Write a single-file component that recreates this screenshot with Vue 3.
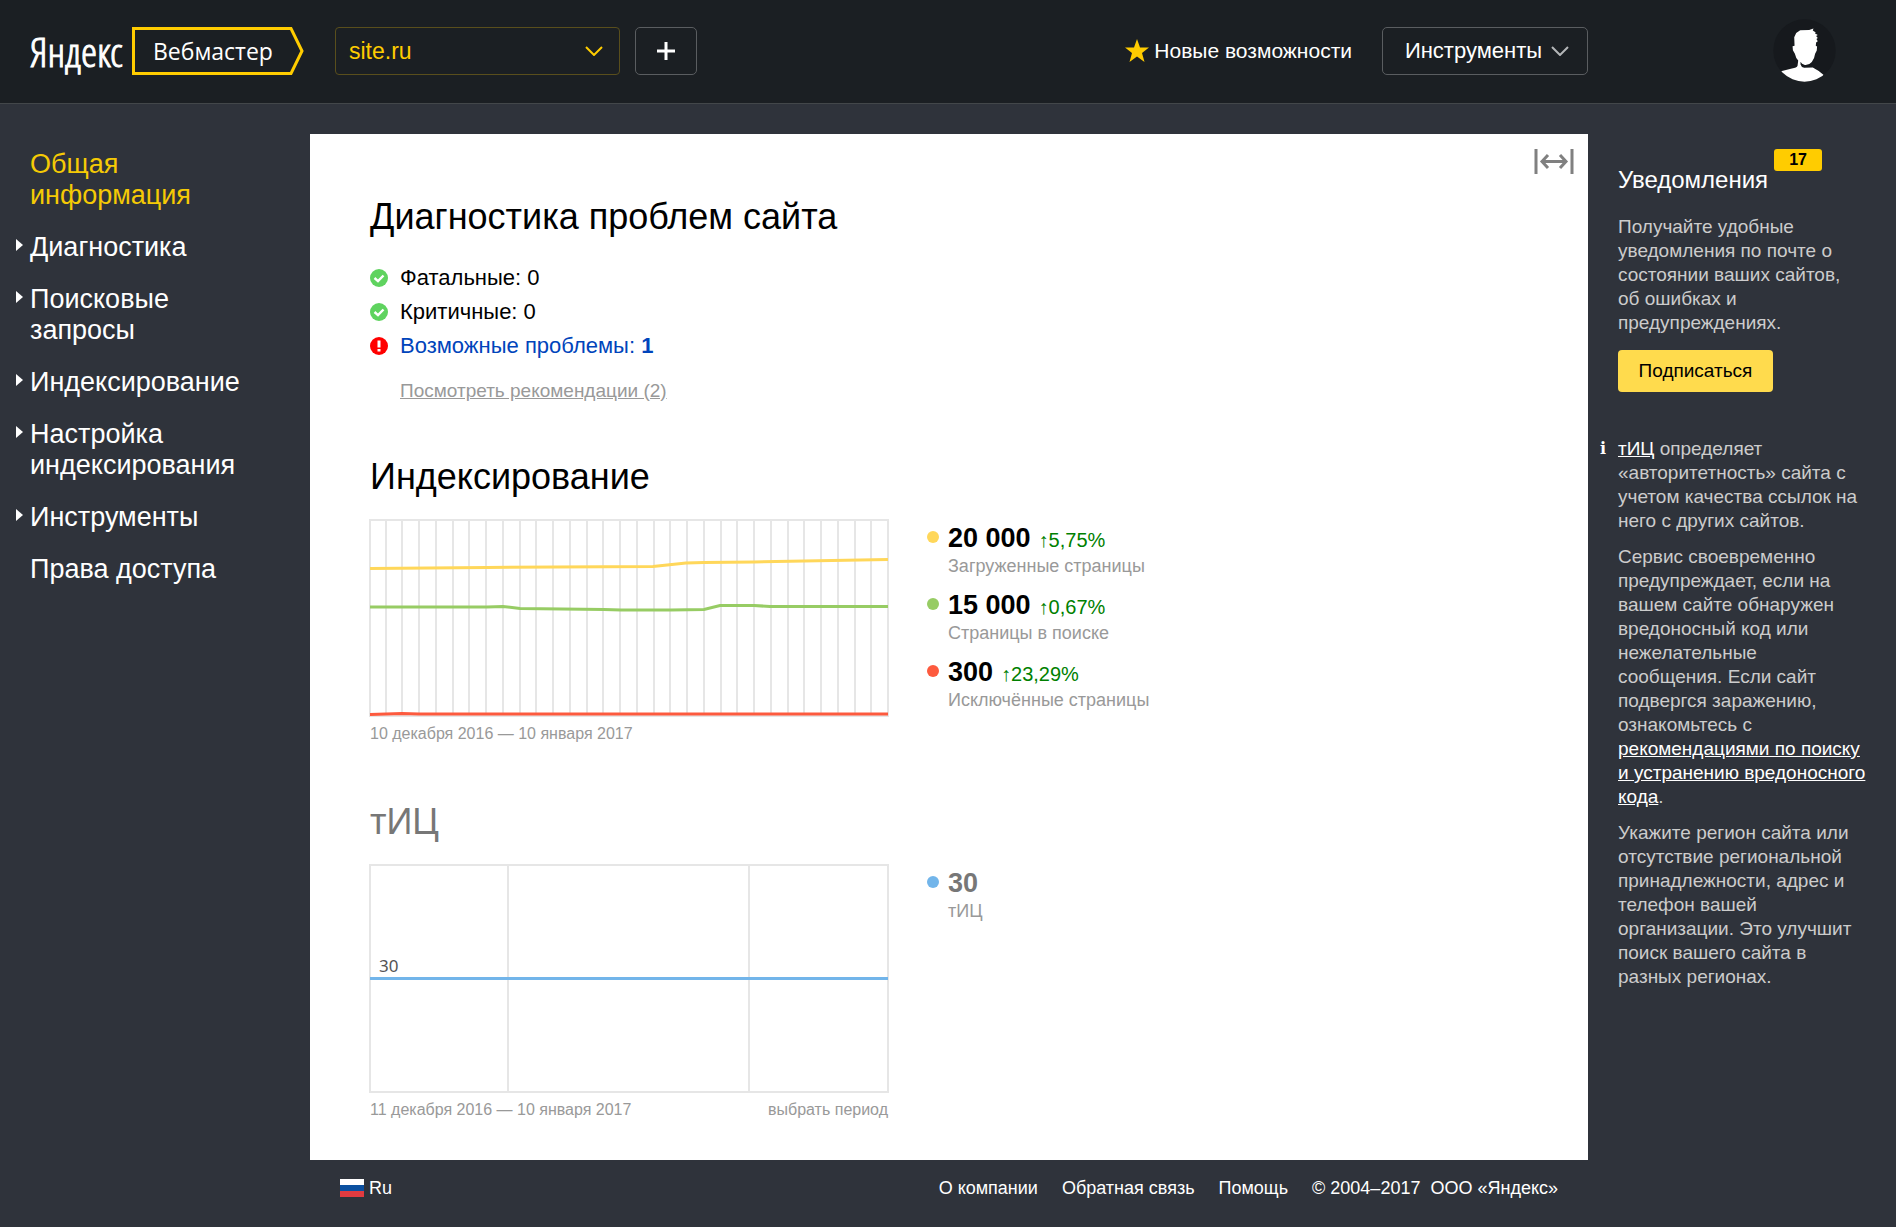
<script setup>
import { ref } from 'vue'

const site = ref('site.ru')

const menu = [
  { text: 'Общая информация', active: true, nested: false },
  { text: 'Диагностика', nested: true },
  { text: 'Поисковые запросы', nested: true },
  { text: 'Индексирование', nested: true },
  { text: 'Настройка индексирования', nested: true },
  { text: 'Инструменты', nested: true },
  { text: 'Права доступа', nested: false },
]

const legend = [
  { color: '#ffd75a', value: '20 000', change: '5,75%', label: 'Загруженные страницы' },
  { color: '#97cc64', value: '15 000', change: '0,67%', label: 'Страницы в поиске' },
  { color: '#fd5a3e', value: '300', change: '23,29%', label: 'Исключённые страницы' },
]

// One vertical rule per day between the chart edges
const dayLines = Array.from({ length: 30 }, (_, i) => Math.round(((i + 1) * 519) / 31))
</script>

<template>
  <div class="page">
    <header class="header">
      <div class="brand">
        <a class="logo" href="#">Яндекс</a>
        <a class="service" href="#">
          <svg class="service-frame" viewBox="0 0 172 48" aria-hidden="true">
            <path d="M1.5 1.5H159L170 24L159 46.5H1.5Z" fill="none" stroke="#fc0" stroke-width="3" />
          </svg>
          <span class="service-name">Вебмастер</span>
        </a>
      </div>

      <div class="toolbar">
        <div class="site-select">
          <select v-model="site" aria-label="Сайт">
            <option value="site.ru">site.ru</option>
          </select>
          <svg class="chevron" viewBox="0 0 18 10" aria-hidden="true">
            <path d="M1 1L9 9L17 1" fill="none" stroke="#fc0" stroke-width="2" />
          </svg>
        </div>
        <button class="box-button add" type="button" aria-label="Добавить сайт">
          <svg width="20" height="20" viewBox="0 0 20 20" aria-hidden="true">
            <path d="M10 1V19M1 10H19" stroke="#fff" stroke-width="3" />
          </svg>
        </button>
        <a class="news" href="#">
          <svg width="24" height="23" viewBox="0 0 24 23" aria-hidden="true">
            <path d="M12 0L15 8.500H24L17 14L19.500 23L12 17.500L4.500 23L7 14L0 8.500H9Z" fill="#fc0" />
          </svg>
          <span>Новые возможности</span>
        </a>
        <button class="box-button tools" type="button">
          <span>Инструменты</span>
          <svg width="18" height="10" viewBox="0 0 18 10" aria-hidden="true">
            <path d="M1 1L9 9L17 1" fill="none" stroke="#b4b6b8" stroke-width="2" />
          </svg>
        </button>
      </div>

      <a class="user" href="#" aria-label="Профиль">
        <svg width="63" height="63" viewBox="38 27 190 190" aria-hidden="true">
          <defs>
            <clipPath id="avatar-clip"><circle cx="133" cy="122" r="94" /></clipPath>
          </defs>
          <circle cx="133" cy="122" r="94" fill="#16191d" />
          <path
            clip-path="url(#avatar-clip)"
            fill="#fff"
            d="M50 217V195L65 184L95 176Q110 174 112 168L114 152Q107 146 104 132L98 121L97 109L103 108L102 82L108 69L120 61L147 60L160 56L158 62L167 68L164 70L173 75L168 78L173 84L169 87L173 94L168 98L167 108L171 110L170 122L165 132Q163 148 155 157Q147 167 134 166Q124 163 121 156L121 164Q123 172 132 174L158 173Q176 182 190 195V217Z"
          />
        </svg>
      </a>
    </header>

    <div class="body">
      <nav class="menu" aria-label="Разделы">
        <ul>
          <li v-for="item in menu" :key="item.text" :class="{ nested: item.nested }">
            <a href="#" :class="{ active: item.active }">{{ item.text }}</a>
          </li>
        </ul>
      </nav>

      <div class="center">
        <main class="card">
          <button class="expand" type="button" aria-label="Растянуть на всю ширину">
            <svg width="40" height="25" viewBox="0 0 40 25" aria-hidden="true">
              <path d="M2 0V25M38 0V25" stroke="#808080" stroke-width="3" />
              <path d="M8 12.500H32M14 6L8 12.500L14 19M26 6L32 12.500L26 19" fill="none" stroke="#808080" stroke-width="3" />
            </svg>
          </button>

          <section>
            <h2>Диагностика проблем сайта</h2>
            <ul class="checks">
              <li>
                <svg width="18" height="18" viewBox="0 0 18 18" aria-hidden="true">
                  <circle cx="9" cy="9" r="9" fill="#5fd35f" />
                  <path d="M4.500 9L8 12.200L13.500 6.500" fill="none" stroke="#fff" stroke-width="2.400" />
                </svg>
                <span>Фатальные: 0</span>
              </li>
              <li>
                <svg width="18" height="18" viewBox="0 0 18 18" aria-hidden="true">
                  <circle cx="9" cy="9" r="9" fill="#5fd35f" />
                  <path d="M4.500 9L8 12.200L13.500 6.500" fill="none" stroke="#fff" stroke-width="2.400" />
                </svg>
                <span>Критичные: 0</span>
              </li>
              <li>
                <svg width="18" height="18" viewBox="0 0 18 18" aria-hidden="true">
                  <circle cx="9" cy="9" r="9" fill="#f00" />
                  <path d="M7.500 3.500H10.500V10.500H7.500ZM7.500 12H10.500V14.500H7.500Z" fill="#fff" />
                </svg>
                <a href="#">Возможные проблемы: <b>1</b></a>
              </li>
            </ul>
            <a class="advice" href="#">Посмотреть рекомендации (2)</a>
          </section>

          <section class="indexing">
            <h2>Индексирование</h2>
            <div class="report">
              <figure>
                <svg class="chart" viewBox="0 0 520 198" aria-hidden="true">
                  <path
                    v-for="x in dayLines"
                    :key="x"
                    :d="`M${x} 1V197`"
                    stroke="#e6e6e6"
                    stroke-width="2"
                  />
                  <rect x="1" y="1" width="518" height="196" fill="none" stroke="#e6e6e6" stroke-width="2" />
                  <g fill="none" stroke-width="3">
                    <path d="M1 49.500L118 48.500L284 47.500L317 44L335 43.500L385 43L519 40.500" stroke="#ffd75a" />
                    <path
                      d="M1 88L118 88L134 87.500L151 89.500L235 90.500L252 91L302 91L335 90.500L351 86.500L385 86.500L401 87.500L519 87.500"
                      stroke="#97cc64"
                    />
                    <path d="M1 195.500L33 194.500L50 195L519 195" stroke="#fd5a3e" />
                  </g>
                </svg>
                <figcaption><span>10 декабря 2016 — 10 января 2017</span></figcaption>
              </figure>
              <ul class="legend">
                <li v-for="item in legend" :key="item.label">
                  <i :style="{ background: item.color }"></i>
                  <div>
                    <p class="figure"><b>{{ item.value }}</b> <span>↑{{ item.change }}</span></p>
                    <p class="caption">{{ item.label }}</p>
                  </div>
                </li>
              </ul>
            </div>
          </section>

          <section class="citation">
            <h2>тИЦ</h2>
            <div class="report">
              <figure>
                <svg class="chart" viewBox="0 0 520 229" role="img" aria-label="тИЦ">
                  <path d="M139 1V228M380 1V228" stroke="#e6e6e6" stroke-width="2" />
                  <rect x="1" y="1" width="518" height="227" fill="none" stroke="#e6e6e6" stroke-width="2" />
                  <path d="M1 114.500H519" stroke="#72b5ea" stroke-width="3" />
                  <text x="10" y="108">30</text>
                </svg>
                <figcaption>
                  <span>11 декабря 2016 — 10 января 2017</span>
                  <a href="#">выбрать период</a>
                </figcaption>
              </figure>
              <ul class="legend">
                <li>
                  <i class="blue"></i>
                  <div>
                    <p class="figure"><b>30</b></p>
                    <p class="caption">тИЦ</p>
                  </div>
                </li>
              </ul>
            </div>
          </section>
        </main>

        <footer class="footer">
          <button class="lang" type="button">
            <svg width="24" height="18" viewBox="0 0 24 18" aria-hidden="true">
              <path d="M0 0H24V6H0Z" fill="#fff" />
              <path d="M0 6H24V12H0Z" fill="#0b50a0" />
              <path d="M0 12H24V18H0Z" fill="#e23b40" />
            </svg>
            <span>Ru</span>
          </button>
          <a href="#">О компании</a>
          <a href="#">Обратная связь</a>
          <a href="#">Помощь</a>
          <span class="copyright">
            <span>© 2004–2017</span>
            <a href="#">ООО «Яндекс»</a>
          </span>
        </footer>
      </div>

      <aside class="aside">
        <section class="notices">
          <h3>Уведомления <span class="badge">17</span></h3>
          <p>Получайте удобные уведомления по почте о состоянии ваших сайтов, об ошибках и предупреждениях.</p>
          <button class="subscribe" type="button">Подписаться</button>
        </section>
        <section class="help">
          <b class="mark">i</b>
          <div>
            <p><a href="#">тИЦ</a> определяет «авторитетность» сайта с учетом качества ссылок на него с других сайтов.</p>
            <p>
              Сервис своевременно предупреждает, если на вашем сайте обнаружен вредоносный код или
              нежелательные<br />
              сообщения. Если сайт подвергся заражению, ознакомьтесь с
              <a href="#">рекомендациями по поиску и устранению вредоносного кода</a>.
            </p>
            <p>
              Укажите регион сайта или отсутствие региональной принадлежности, адрес и телефон вашей
              организации. Это улучшит поиск вашего сайта в разных регионах.
            </p>
          </div>
        </section>
      </aside>
    </div>
  </div>
</template>

<style>
body {
  margin: 0;
  background: #2f333b;
}
</style>

<style scoped>
.page {
  min-height: 100vh;
  background: #2f333b;
  color: #fff;
  font-family: 'Liberation Sans', Arial, sans-serif;
}
.page * {
  box-sizing: border-box;
}
a {
  color: inherit;
  text-decoration: none;
}
button,
select {
  margin: 0;
  padding: 0;
  border: 0;
  background: none;
  color: inherit;
  font: inherit;
  cursor: pointer;
}
ul,
figure,
h2,
h3,
p {
  margin: 0;
  padding: 0;
  list-style: none;
  font-weight: normal;
}
svg {
  display: block;
  flex: none;
}

.header,
.body {
  display: grid;
  grid-template-columns: 310px minmax(0, 1fr) 308px;
}

/* Header */
.header {
  align-items: center;
  height: 104px;
  padding-bottom: 2px;
  border-bottom: 1px solid #43474a;
  background: #1b1f23;
}
.brand {
  display: flex;
  align-items: center;
  justify-content: space-between;
  padding: 0 6px 0 30px;
}
.logo {
  font-family: 'Open Sans Condensed Light', 'Open Sans Condensed', 'Liberation Sans Narrow', sans-serif;
  font-size: 41px;
  font-weight: 300;
  line-height: 48px;
  -webkit-text-stroke: 1px #fff;
}
.service {
  display: grid;
  width: 172px;
  height: 48px;
}
.service-frame,
.service-name {
  grid-area: 1 / 1;
}
.service-name {
  padding-left: 21px;
  font-family: 'Open Sans', sans-serif;
  font-size: 23px;
  line-height: 48px;
}
.toolbar {
  display: flex;
  align-items: center;
  padding-left: 25px;
}
.site-select {
  display: grid;
  align-items: center;
  width: 285px;
  margin-right: 15px;
}
.site-select select {
  grid-area: 1 / 1;
  height: 48px;
  padding: 0 13px;
  border: 1px solid #594e1c;
  border-radius: 4px;
  appearance: none;
  color: #fc0;
  font-size: 23px;
}
.site-select .chevron {
  grid-area: 1 / 1;
  justify-self: end;
  width: 18px;
  margin-right: 17px;
  pointer-events: none;
}
.box-button {
  display: flex;
  align-items: center;
  justify-content: center;
  height: 48px;
  border: 1px solid #5a5d60;
  border-radius: 5px;
}
.add {
  width: 62px;
}
.news {
  display: flex;
  align-items: center;
  gap: 5px;
  margin: 0 30px 0 auto;
  font-size: 21px;
}
.tools {
  gap: 9px;
  width: 206px;
  padding-left: 4px;
  font-size: 22px;
}
.user {
  justify-self: end;
  margin-right: 60px;
}

/* Sections menu */
.menu {
  padding: 45px 50px 0 30px;
  font-size: 27px;
  line-height: 31px;
}
.menu li {
  position: relative;
  margin-bottom: 21px;
}
.menu .nested::before {
  content: '';
  position: absolute;
  top: 7px;
  left: -14px;
  border: 6px solid transparent;
  border-right-width: 0;
  border-left: 7px solid #fff;
}
.menu .active {
  color: #f5ca05;
}

/* Main card */
.center {
  padding-top: 30px;
}
.card {
  position: relative;
  padding: 61px 60px 38px;
  background: #fff;
  color: #000;
}
.expand {
  position: absolute;
  top: 15px;
  right: 14px;
}
h2 {
  font-size: 36px;
  line-height: 44px;
}
.checks {
  margin-top: 22px;
  font-size: 22px;
  line-height: 34px;
}
.checks li {
  display: flex;
  align-items: center;
  gap: 12px;
}
.checks a {
  color: #04b;
}
.advice {
  display: inline-block;
  margin: 16px 0 0 30px;
  color: #999;
  font-size: 19px;
  line-height: 24px;
  text-decoration: underline;
}
.indexing {
  margin-top: 52px;
}
.citation {
  margin-top: 54px;
  color: #777;
}
.report {
  display: flex;
  gap: 38px;
  margin: 20px 0 0 -1px;
}
.report figure {
  width: 520px;
}
.chart {
  width: 100%;
}
.chart text {
  fill: #555;
  font-family: 'Noto Sans', sans-serif;
  font-size: 17px;
}
figcaption {
  display: flex;
  justify-content: space-between;
  margin-top: 5px;
  padding: 0 1px;
  color: #999;
  font-size: 16px;
  line-height: 24px;
}
.legend {
  display: grid;
  gap: 12px;
  align-content: start;
  padding-top: 4px;
}
.legend li {
  display: flex;
  gap: 9px;
}
.legend i {
  width: 12px;
  height: 12px;
  margin-top: 8px;
  border-radius: 50%;
}
.legend .blue {
  background: #72b5ea;
}
.figure {
  display: flex;
  gap: 8px;
  align-items: baseline;
  height: 31px;
  font-size: 20px;
  line-height: 31px;
}
.figure b {
  font-size: 27px;
}
.figure span {
  color: #008000;
}
.caption {
  color: #999;
  font-size: 18px;
  line-height: 24px;
}

/* Footer */
.footer {
  display: flex;
  align-items: center;
  gap: 24px;
  padding: 16px 30px 27px;
  font-size: 18px;
  line-height: 24px;
}
.lang {
  display: flex;
  align-items: center;
  gap: 5px;
  margin-right: auto;
}
.copyright {
  display: flex;
  gap: 10px;
}

/* Right column */
.aside {
  padding: 61px 24px 0 12px;
  color: #ccc;
  font-size: 19px;
  line-height: 24px;
}
.notices {
  max-width: 260px;
  margin-left: 18px;
}
h3 {
  display: flex;
  gap: 6px;
  margin-bottom: 20px;
  color: #fff;
  font-size: 24px;
  line-height: 30px;
}
.notices p {
  max-width: 240px;
}
.badge {
  align-self: flex-start;
  width: 48px;
  height: 22px;
  margin-top: -16px;
  border-radius: 3px;
  background: #fc0;
  color: #000;
  font-size: 16px;
  font-weight: bold;
  line-height: 21px;
  text-align: center;
}
.subscribe {
  width: 155px;
  height: 42px;
  margin-top: 15px;
  border-radius: 4px;
  background: #ffdb4d;
  color: #000;
  font-size: 19px;
}
.help {
  display: grid;
  grid-template-columns: 18px minmax(0, 1fr);
  margin-top: 45px;
}
.help p {
  margin-bottom: 12px;
}
.help a {
  color: #fff;
  text-decoration: underline;
}
.mark {
  color: #fff;
  font-family: 'DejaVu Serif', serif;
  font-size: 16px;
}
</style>
